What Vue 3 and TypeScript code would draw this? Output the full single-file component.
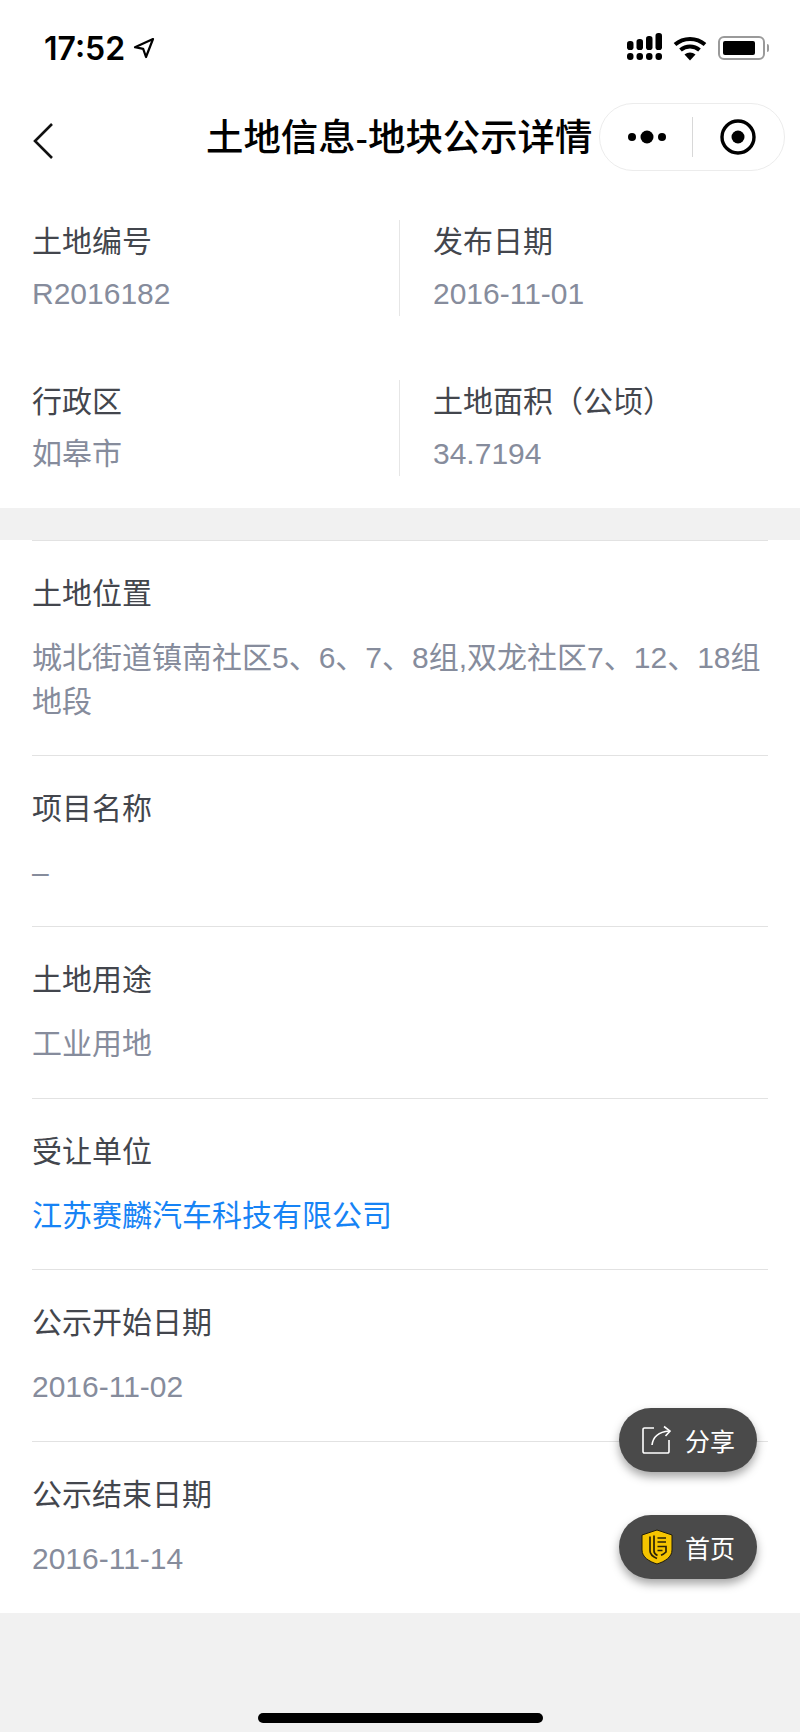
<script setup lang="ts">
interface Cell {
  label: string
  value: string
}

interface Row {
  label: string
  lines: string
  link?: boolean
}

const topCells: Cell[] = [
  { label: '土地编号', value: 'R2016182' },
  { label: '发布日期', value: '2016-11-01' },
  { label: '行政区', value: '如皋市' },
  { label: '土地面积（公顷）', value: '34.7194' },
]

const rows: Row[] = [
  { label: '项目名称', lines: '–' },
  { label: '土地用途', lines: '工业用地' },
  { label: '受让单位', lines: '江苏赛麟汽车科技有限公司', link: true },
  { label: '公示开始日期', lines: '2016-11-02' },
  { label: '公示结束日期', lines: '2016-11-14' },
]
</script>

<template>
  <div class="page">
    <div class="status-bar">
      <div class="time">
        <span>17:52</span>
        <svg class="loc" width="22" height="22" viewBox="0 0 22 22">
          <path d="M20 2 2 10.200l8.200 1.600L13 20z" fill="none" stroke="#000" stroke-width="2.200" stroke-linejoin="round" />
        </svg>
      </div>
      <div class="status-icons">
        <svg class="signal" width="36" height="28" viewBox="0 0 36 28">
          <g fill="#000">
            <rect x="0" y="8" width="6.500" height="9" rx="2.800" />
            <rect x="9.500" y="6" width="6.500" height="11" rx="2.800" />
            <rect x="19" y="3" width="6.500" height="14" rx="2.800" />
            <rect x="28.500" y="0" width="6.500" height="17" rx="2.800" />
            <rect x="0" y="20" width="6.500" height="7" rx="3" />
            <rect x="9.500" y="20" width="6.500" height="7" rx="3" />
            <rect x="19" y="20" width="6.500" height="7" rx="3" />
            <rect x="28.500" y="20" width="6.500" height="7" rx="3" />
          </g>
        </svg>
        <svg width="34" height="26" viewBox="0 0 34 26">
          <path d="M2 9.500C10.500 2 23.500 2 32 9.500" fill="none" stroke="#000" stroke-width="4" />
          <path d="M7.500 15c5.500-4.700 13.500-4.700 19 0" fill="none" stroke="#000" stroke-width="4" />
          <path d="M11.500 19.500c3.200-2.700 7.800-2.700 11 0L17 25.500z" fill="#000" />
        </svg>
        <div class="battery">
          <div class="battery-body"><div class="battery-fill"></div></div>
          <div class="battery-cap"></div>
        </div>
      </div>
    </div>

    <div class="nav-bar">
      <svg class="back" width="22" height="38" viewBox="0 0 22 38">
        <path d="M20 2 3 19l17 17" fill="none" stroke="#111" stroke-width="2.600" />
      </svg>
      <div class="nav-title">土地信息-地块公示详情</div>
      <div class="capsule">
        <svg width="42" height="16" viewBox="0 0 42 16">
          <circle cx="6" cy="8" r="4" fill="#000" />
          <circle cx="21" cy="8" r="6.500" fill="#000" />
          <circle cx="36" cy="8" r="4" fill="#000" />
        </svg>
        <div class="capsule-line"></div>
        <svg width="38" height="38" viewBox="0 0 38 38">
          <circle cx="19" cy="19" r="16" fill="none" stroke="#000" stroke-width="3.400" />
          <circle cx="19" cy="19" r="6.500" fill="#000" />
        </svg>
      </div>
    </div>

    <section class="top-grid">
      <div v-for="cell in topCells" :key="cell.label" class="cell">
        <div class="label">{{ cell.label }}</div>
        <div class="value">{{ cell.value }}</div>
      </div>
    </section>

    <section class="list">
      <div class="row first">
        <div class="label">土地位置</div>
        <div class="value">城北街道镇南社区5、6、7、8组,双龙社区7、12、18组地段</div>
      </div>
      <div v-for="row in rows" :key="row.label" class="row">
        <div class="label">{{ row.label }}</div>
        <div class="value" :class="{ link: row.link }">{{ row.lines }}</div>
      </div>
    </section>

    <div class="float-btn share">
      <svg width="32" height="30" viewBox="0 0 32 30">
        <path d="M13 3H3.500A1.500 1.500 0 0 0 2 4.500v22A1.500 1.500 0 0 0 3.500 28h23a1.500 1.500 0 0 0 1.500-1.500V15" fill="none" stroke="#fff" stroke-width="1.600" />
        <path d="M11 20C12 12 17 7 28 6" fill="none" stroke="#fff" stroke-width="1.600" />
        <path d="M23 1.500 29 6l-4.500 5" fill="none" stroke="#fff" stroke-width="1.600" />
      </svg>
      <span>分享</span>
    </div>
    <div class="float-btn home">
      <svg width="32" height="38" viewBox="0 0 32 36">
        <path d="M16 1 31 6v15c0 7-7 11.500-15 14C8 32.500 1 28 1 21V6z" fill="#f5c400" stroke="#1e1a0a" stroke-width="1" />
        <path d="M9 7.500V22c0 3 2.500 5.500 7 7.500M13 6.500V22c0 2 1.200 3.500 3.500 4.500" fill="none" stroke="#2a2208" stroke-width="1.700" />
        <path d="M16.500 9H25M16.500 13H25M16.500 17.500H25V23c-1.500 1.500-3 2.500-5 3.300M16.500 21.500h5" fill="none" stroke="#2a2208" stroke-width="1.700" />
      </svg>
      <span>首页</span>
    </div>

    <div class="home-indicator"></div>
  </div>
</template>

<style scoped>
.page {
  position: relative;
  width: 800px;
  height: 1732px;
  background: #f1f1f1;
  overflow: hidden;
  font-family: "Liberation Sans", "Noto Sans CJK SC", sans-serif;
}

.status-bar {
  height: 88px;
  background: #fff;
  display: flex;
  justify-content: space-between;
  align-items: center;
  padding: 8px 31px 0 44px;
  box-sizing: border-box;
}

.time {
  display: flex;
  align-items: center;
  gap: 8px;
  font-family: Inter, "Liberation Sans", sans-serif;
  font-size: 32px;
  font-weight: 600;
  color: #000;
}

.status-icons {
  display: flex;
  align-items: center;
  gap: 10px;
}

.signal {
  margin-top: -3px;
}

.battery {
  display: flex;
  align-items: center;
  gap: 2px;
  margin-left: 1px;
}

.battery-body {
  width: 47px;
  height: 24px;
  box-sizing: border-box;
  border: 2px solid #9a9a9a;
  border-radius: 6px;
  padding: 3px;
}

.battery-fill {
  width: 32px;
  height: 100%;
  background: #000;
  border-radius: 2px;
}

.battery-cap {
  width: 2px;
  height: 8px;
  background: #9a9a9a;
  border-radius: 0 2px 2px 0;
}

.nav-bar {
  height: 92px;
  background: #fff;
  display: flex;
  align-items: center;
  padding-left: 32px;
  padding-right: 15px;
}

.back {
  flex: none;
  margin-top: 13px;
}

.nav-title {
  margin-left: 152px;
  font-size: 37.400px;
  font-weight: 500;
  color: #000;
  white-space: nowrap;
  margin-top: 2px;
}

.capsule {
  flex: none;
  margin-left: auto;
  width: 186px;
  height: 68px;
  box-sizing: border-box;
  border: 1px solid #ececec;
  border-radius: 34px;
  background: #fff;
  display: flex;
  align-items: center;
  padding-left: 26px;
  margin-top: 6px;
}

.capsule-line {
  width: 1px;
  height: 40px;
  background: #d8d8d8;
  margin: 0 26px 0 24px;
}

.top-grid {
  height: 328px;
  background: #fff;
  display: grid;
  grid-template-columns: 367px 1fr;
  grid-auto-rows: 96px;
  row-gap: 64px;
  padding: 40px 0 0 32px;
  box-sizing: border-box;
}

.cell {
  display: flex;
  flex-direction: column;
  justify-content: space-between;
  padding-top: 2px;
  box-sizing: border-box;
}

.cell:nth-child(even) {
  border-left: 1px solid #e6e6e6;
  padding-left: 33px;
}

.label {
  font-size: 30px;
  line-height: 40px;
  color: #43464d;
}

.value {
  font-size: 30px;
  line-height: 44px;
  color: #868c9c;
}

.list {
  margin-top: 32px;
  height: 1073px;
  background: #fff;
  padding: 0 32px;
  box-sizing: border-box;
}

.row {
  height: 171.670px;
  box-sizing: border-box;
  border-top: 1px solid #e2e2e2;
  padding-top: 33px;
  display: flex;
  flex-direction: column;
  gap: 22px;
}

.row.first {
  height: 214.500px;
}

.value.link {
  color: #1683f5;
}

.float-btn {
  position: absolute;
  left: 619px;
  width: 138px;
  height: 64px;
  border-radius: 32px;
  background: #4a4a4a;
  box-shadow: 0 5px 10px rgba(0, 0, 0, 0.35);
  display: flex;
  align-items: center;
  padding-left: 22px;
  box-sizing: border-box;
  gap: 12px;
  color: #fff;
  font-size: 25px;
}

.float-btn.share {
  top: 1408px;
}

.float-btn.home {
  top: 1515px;
}

.home-indicator {
  position: absolute;
  left: 258px;
  bottom: 9px;
  width: 285px;
  height: 10px;
  border-radius: 5px;
  background: #000;
}
</style>
